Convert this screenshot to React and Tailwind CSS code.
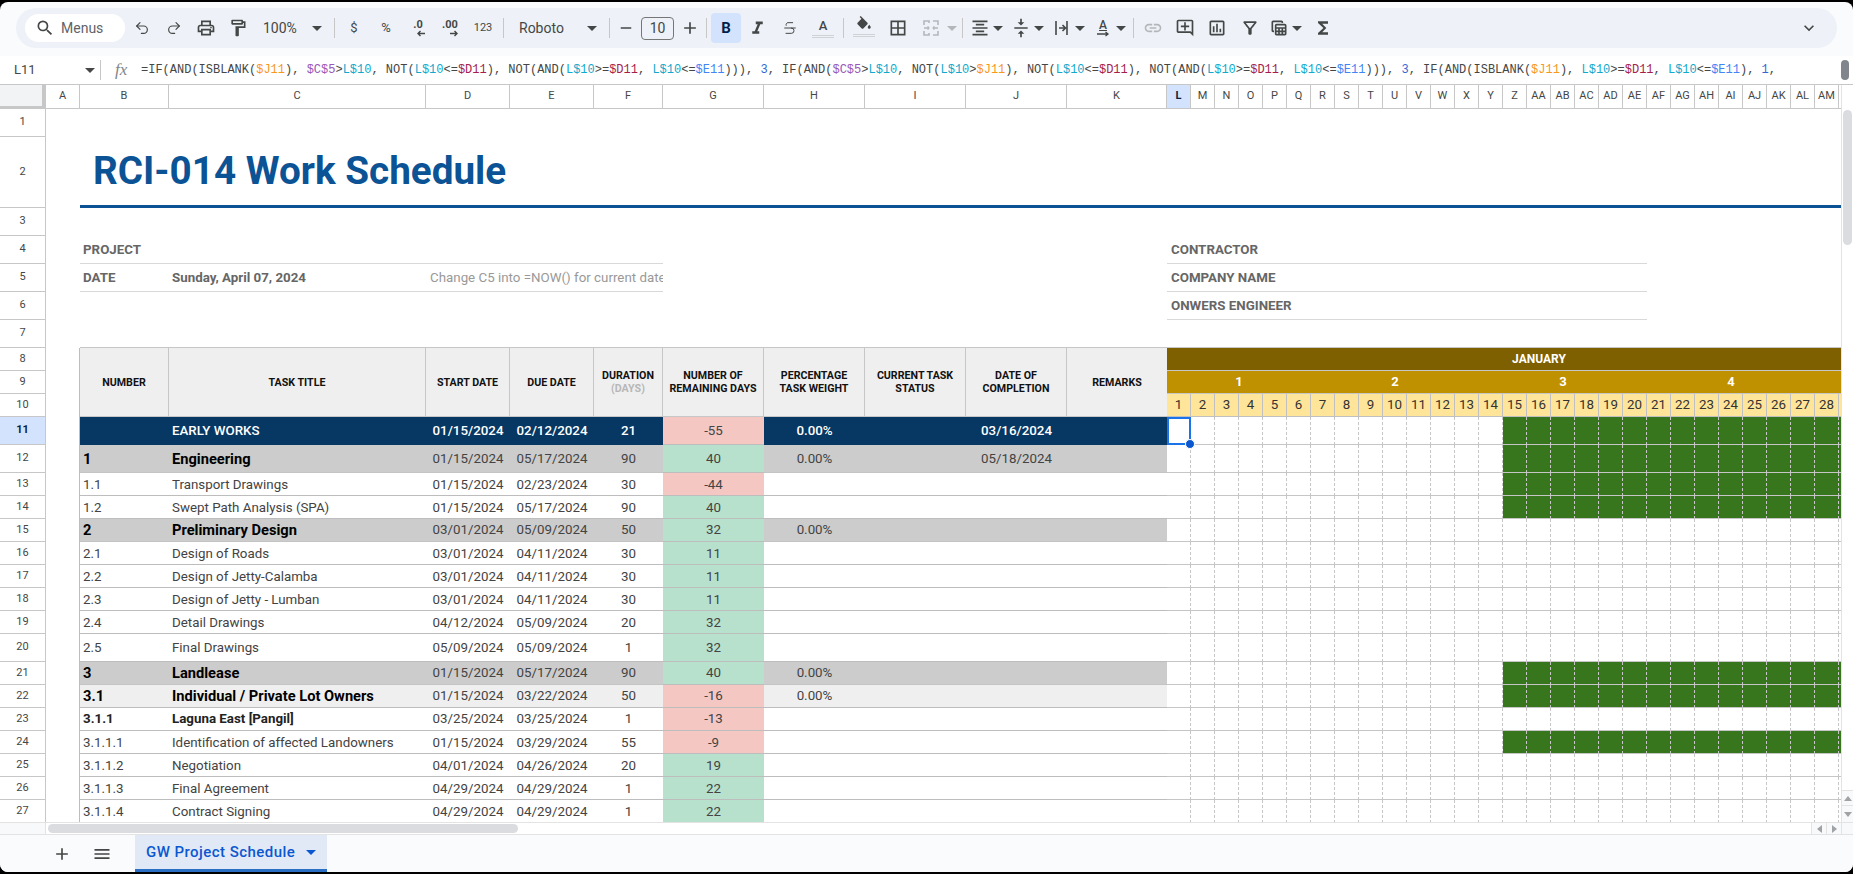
import React from 'react';
import { Undo2, Redo2, Strikethrough } from 'lucide-react';
import {
  MdSearch, MdOutlineLocalPrintshop, MdOutlineFormatPaint, MdAdd, MdRemove,
  MdFormatItalic, MdBorderAll, MdFormatAlignCenter,
  MdVerticalAlignCenter, MdLink, MdOutlineAddComment, MdOutlineInsertChart, MdOutlineFilterAlt,
  MdOutlineTableView, MdFunctions, MdExpandMore, MdMenu,
} from 'react-icons/md';

const GRID = 'grid grid-cols-[46px_34px_89px_257px_84px_84px_69px_101px_101px_101px_101px_100px_repeat(31,24px)]';
const LINE = 'border-[#bdbdbd]';

const FORMULA = '=IF(AND(ISBLANK($J11), $C$5>L$10, NOT(L$10<=$D11), NOT(AND(L$10>=$D11, L$10<=$E11))), 3, IF(AND($C$5>L$10, NOT(L$10>$J11), NOT(L$10<=$D11), NOT(AND(L$10>=$D11, L$10<=$E11))), 3, IF(AND(ISBLANK($J11), L$10>=$D11, L$10<=$E11), 1,';
const TOKEN_COLORS = {
  '$J11': 'text-[#f7981d]',
  '$C$5': 'text-[#9a57b8]',
  'L$10': 'text-[#11a9cc]',
  '$D11': 'text-[#a61d4c]',
  '$E11': 'text-[#4285f4]',
  '3': 'text-[#3367d6]',
  '1': 'text-[#3367d6]',
};

// the last three columns are only a sliver at the right edge, so they carry no label
const LETTERS = ['A','B','C','D','E','F','G','H','I','J','K','L','M','N','O','P','Q','R','S','T','U','V','W','X','Y','Z','AA','AB','AC','AD','AE','AF','AG','AH','AI','AJ','AK','AL','AM','','',''];
const DAYS = Array.from({ length: 31 }, (_, i) => i + 1);

const ROWS = [
  { n: 11, h: 'h-[28px]', kind: 'navy', num: '', title: 'EARLY WORKS', start: '01/15/2024', due: '02/12/2024', dur: '21', rem: '-55', pct: '0.00%', done: '03/16/2024', bar: true },
  { n: 12, h: 'h-[28px]', kind: 'gray', num: '1', title: 'Engineering', start: '01/15/2024', due: '05/17/2024', dur: '90', rem: '40', pct: '0.00%', done: '05/18/2024', bar: true },
  { n: 13, h: 'h-[23px]', num: '1.1', title: 'Transport Drawings', start: '01/15/2024', due: '02/23/2024', dur: '30', rem: '-44', bar: true },
  { n: 14, h: 'h-[23px]', num: '1.2', title: 'Swept Path Analysis (SPA)', start: '01/15/2024', due: '05/17/2024', dur: '90', rem: '40', bar: true },
  { n: 15, h: 'h-[23px]', kind: 'gray', num: '2', title: 'Preliminary Design', start: '03/01/2024', due: '05/09/2024', dur: '50', rem: '32', pct: '0.00%' },
  { n: 16, h: 'h-[23px]', num: '2.1', title: 'Design of Roads', start: '03/01/2024', due: '04/11/2024', dur: '30', rem: '11' },
  { n: 17, h: 'h-[23px]', num: '2.2', title: 'Design of Jetty-Calamba', start: '03/01/2024', due: '04/11/2024', dur: '30', rem: '11' },
  { n: 18, h: 'h-[23px]', num: '2.3', title: 'Design of Jetty - Lumban', start: '03/01/2024', due: '04/11/2024', dur: '30', rem: '11' },
  { n: 19, h: 'h-[23px]', num: '2.4', title: 'Detail Drawings', start: '04/12/2024', due: '05/09/2024', dur: '20', rem: '32' },
  { n: 20, h: 'h-[28px]', num: '2.5', title: 'Final Drawings', start: '05/09/2024', due: '05/09/2024', dur: '1', rem: '32' },
  { n: 21, h: 'h-[23px]', kind: 'gray', num: '3', title: 'Landlease', start: '01/15/2024', due: '05/17/2024', dur: '90', rem: '40', pct: '0.00%', bar: true },
  { n: 22, h: 'h-[23px]', kind: 'light', num: '3.1', title: 'Individual / Private Lot Owners', start: '01/15/2024', due: '03/22/2024', dur: '50', rem: '-16', pct: '0.00%', bar: true },
  { n: 23, h: 'h-[23px]', kind: 'bold', num: '3.1.1', title: 'Laguna East [Pangil]', start: '03/25/2024', due: '03/25/2024', dur: '1', rem: '-13' },
  { n: 24, h: 'h-[23px]', num: '3.1.1.1', title: 'Identification of affected Landowners', start: '01/15/2024', due: '03/29/2024', dur: '55', rem: '-9', bar: true },
  { n: 25, h: 'h-[23px]', num: '3.1.1.2', title: 'Negotiation', start: '04/01/2024', due: '04/26/2024', dur: '20', rem: '19' },
  { n: 26, h: 'h-[23px]', num: '3.1.1.3', title: 'Final Agreement', start: '04/29/2024', due: '04/29/2024', dur: '1', rem: '22' },
  { n: 27, h: 'h-[23px]', num: '3.1.1.4', title: 'Contract Signing', start: '04/29/2024', due: '04/29/2024', dur: '1', rem: '22' },
];

const HEADERS = [
  ['NUMBER'], ['TASK TITLE'], ['START DATE'], ['DUE DATE'], ['DURATION', '(DAYS)'], ['NUMBER OF', 'REMAINING DAYS'],
  ['PERCENTAGE', 'TASK WEIGHT'], ['CURRENT TASK', 'STATUS'], ['DATE OF', 'COMPLETION'], ['REMARKS'],
];

const Slot = ({ className = 'w-8', children }) => (
  <div className={`h-[30px] flex items-center justify-center text-[#444746] shrink-0 ${className}`}>{children}</div>
);

const Divider = ({ className = '' }) => <div className={`w-px h-[20px] bg-[#c7c7c7] shrink-0 ${className}`} />;

const Caret = ({ className = 'text-[#444746]' }) => (
  <span className={`w-3 flex justify-center shrink-0 ${className}`}>
    <svg width="10" height="5" viewBox="0 0 10 5"><path d="M0 0h10L5 5z" fill="currentColor" /></svg>
  </span>
);

const Combo = ({ className = 'w-[41px] pl-[7px]', children, caret }) => (
  <div className={`h-[30px] flex items-center gap-[2px] text-[#444746] shrink-0 ${className}`}>
    {children}
    <Caret className={caret} />
  </div>
);

const MergeIcon = () => (
  <svg width="20" height="20" viewBox="0 0 20 20" fill="none" stroke="#b4b7ba" strokeWidth="1.6">
    <path d="M3 7V3h5v2M12 3h5v4M3 13v4h5v-2M12 17h5v-4M3 10h5M12 10h5" />
    <path d="M8 10 6.5 8.5M8 10l-1.5 1.5M12 10l1.5-1.5M12 10l1.5 1.5" />
  </svg>
);

const OverflowIcon = () => (
  <svg width="20" height="20" viewBox="0 0 20 20" fill="none" stroke="#444746" strokeWidth="1.6">
    <path d="M4 3v14M15 3v14M7 10h6M10.5 7l3 3-3 3" />
  </svg>
);

const BucketIcon = () => (
  <svg width="18" height="18" viewBox="0 0 24 24" fill="currentColor">
    <path d="M16.56 8.94 7.62 0 6.21 1.41l2.38 2.38-5.15 5.15c-.59.59-.59 1.54 0 2.12l5.5 5.5c.29.29.68.44 1.06.44s.77-.15 1.06-.44l5.5-5.5c.59-.58.59-1.53 0-2.12zM19 11.5s-2 2.17-2 3.5c0 1.1.9 2 2 2s2-.9 2-2c0-1.33-2-3.5-2-3.5z" />
  </svg>
);

const DecimalIcon = ({ label, dir }) => (
  <div className="flex flex-col items-center leading-none">
    <span className="text-[11px] font-bold leading-[11px] text-[#444746]">{label}</span>
    <svg width="10" height="7" viewBox="0 0 10 7" fill="none" stroke="#444746" strokeWidth="1.4" className={dir === 'left' ? 'ml-[6px]' : 'ml-[8px]'}>
      {dir === 'left' ? <path d="M9 3.5H2M4.5 1 2 3.5 4.5 6" /> : <path d="M1 3.5h7M5.5 1 8 3.5 5.5 6" />}
    </svg>
  </div>
);

function Toolbar() {
  return (
    <div className="mx-4 mt-[6px] mb-2 h-10 rounded-[20px] bg-[#eef2f8] flex items-center pl-[9px] pr-3">
      <div className="w-[100px] h-7 rounded-[14px] bg-white flex items-center pl-[10px] gap-[6px] text-[14px] text-[#5f6368] shrink-0">
        <MdSearch size={20} className="text-[#444746]" />
        <span>Menus</span>
      </div>
      <Slot className="w-8 ml-px"><Undo2 size={16} strokeWidth={1.75} /></Slot>
      <Slot><Redo2 size={16} strokeWidth={1.75} /></Slot>
      <Slot><MdOutlineLocalPrintshop size={20} /></Slot>
      <Slot><MdOutlineFormatPaint size={20} /></Slot>
      <div className="w-[74px] h-[30px] flex items-center justify-between pl-[9px] pr-[5px] text-[14px] text-[#444746] shrink-0">
        <span>100%</span>
        <Caret />
      </div>
      <Divider className="ml-[6px] mr-[3px]" />
      <Slot><span className="text-[13px]">$</span></Slot>
      <Slot><span className="text-[13px]">%</span></Slot>
      <Slot><DecimalIcon label=".0" dir="left" /></Slot>
      <Slot><DecimalIcon label=".00" dir="right" /></Slot>
      <Slot className="w-[34px]"><span className="text-[11px]">123</span></Slot>
      <Divider className="ml-[3px] mr-2" />
      <div className="w-[90px] h-[30px] flex items-center justify-between pl-[7px] pr-1 text-[14px] text-[#444746] shrink-0">
        <span>Roboto</span>
        <Caret />
      </div>
      <Divider className="ml-[7px]" />
      <Slot className="w-[31px]"><MdRemove size={18} /></Slot>
      <div className="w-[33px] h-[23px] rounded-[4px] border border-[#747775] flex items-center justify-center text-[14px] text-[#444746] shrink-0">10</div>
      <Slot><MdAdd size={20} /></Slot>
      <Divider />
      <div className="ml-1 w-[30px] h-[30px] rounded-[4px] bg-[#d3e3fd] flex items-center justify-center text-[15px] font-bold text-[#041e49] shrink-0">B</div>
      <Slot><MdFormatItalic size={21} /></Slot>
      <Slot className="w-8 ml-px"><Strikethrough size={16} strokeWidth={1.5} /></Slot>
      <Slot className="w-8 ml-px">
        <div className="flex flex-col items-center">
          <span className="text-[13px] leading-[14px] font-medium">A</span>
          <span className="w-[22px] h-[3px] mt-[2px] border-y border-[#d0d3d6]" />
        </div>
      </Slot>
      <Divider className="ml-1" />
      <Slot className="w-8 ml-1">
        <div className="flex flex-col items-center -mt-1">
          <BucketIcon />
          <span className="w-[22px] h-[3px] border-y border-[#d0d3d6]" />
        </div>
      </Slot>
      <Slot className="w-8 ml-[2px]"><MdBorderAll size={20} /></Slot>
      <Combo className="w-[43px] ml-px pl-[6px] gap-[5px]" caret="text-[#b4b7ba]"><MergeIcon /></Combo>
      <Divider className="ml-1" />
      <Combo><MdFormatAlignCenter size={20} /></Combo>
      <Combo><MdVerticalAlignCenter size={20} /></Combo>
      <Combo><OverflowIcon /></Combo>
      <Combo>
        <div className="w-5 flex flex-col items-center">
          <span className="text-[12px] leading-[12px] font-medium underline">A</span>
          <svg width="14" height="6" viewBox="0 0 14 6" fill="none" stroke="#444746" strokeWidth="1.3"><path d="M1 3h11M9.5 1 12 3 9.5 5" /></svg>
        </div>
      </Combo>
      <Divider className="ml-[6px]" />
      <Slot className="w-8 ml-[3px]"><MdLink size={20} className="text-[#b4b7ba]" /></Slot>
      <Slot><MdOutlineAddComment size={20} /></Slot>
      <Slot><MdOutlineInsertChart size={20} /></Slot>
      <Slot className="w-8 ml-px"><MdOutlineFilterAlt size={20} /></Slot>
      <Combo className="w-[41px] pl-[3px]"><MdOutlineTableView size={20} /></Combo>
      <Slot><MdFunctions size={20} /></Slot>
      <Slot className="w-8 ml-auto"><MdExpandMore size={20} /></Slot>
    </div>
  );
}

function FormulaBar() {
  const parts = FORMULA.split(/(\$J11|\$C\$5|L\$10|\$D11|\$E11|\b[13](?=,))/);
  return (
    <div className="h-[29px] bg-white flex items-center border-b border-[#c7c7c7]">
      <span className="w-[84px] pl-[14px] text-[13px] text-[#444746] shrink-0">L11</span>
      <Caret />
      <div className="w-px h-[20px] bg-[#c7c7c7] ml-[4px] shrink-0" />
      <span className="w-[40px] pl-[14px] text-[17px] italic text-[#80868b] font-['Liberation_Serif',serif] shrink-0">fx</span>
      <div className="flex-1 overflow-hidden whitespace-pre text-[12px] text-[#444746] font-['Liberation_Mono',monospace]">
        {parts.map((p, i) => (TOKEN_COLORS[p] ? <span key={i} className={TOKEN_COLORS[p]}>{p}</span> : p))}
      </div>
      <div className="w-2 h-5 rounded bg-[#80868b] mx-1 shrink-0" />
    </div>
  );
}

const RowHead = ({ n, active }) => (
  <div className={`col-start-1 flex items-center justify-center text-[11px] border-r border-b border-[#c7c7c7] ${active ? 'bg-[#d3e3fd] text-[#0b1f3f] font-bold' : 'bg-white text-[#444746]'}`}>{n}</div>
);

const SideCell = () => <div className={`col-start-2 border-r ${LINE}`} />;

function ColumnHeader() {
  return (
    <div className={`${GRID} h-6`}>
      <div className="bg-[#f1f3f4] border-r-4 border-b-[3px] border-[#c7c7c7]" />
      {LETTERS.map((l, i) => (
        <div key={i} className={`flex items-center justify-center text-[11px] border-r border-b border-[#c7c7c7] ${l === 'L' ? 'bg-[#d3e3fd] text-[#0b1f3f] font-bold' : 'bg-white text-[#444746]'}`}>{l}</div>
      ))}
    </div>
  );
}

function InfoRows() {
  const label = 'text-[13.33px] font-bold text-[#666666] whitespace-nowrap';
  const rule = 'border-b border-[#d9d9d9] flex items-center';
  return (
    <>
      <div className={`${GRID} h-7`}><RowHead n={1} /></div>
      <div className={`${GRID} h-[71px]`}>
        <RowHead n={2} />
        <div className="col-start-3 col-span-41 border-b-[3px] border-[#0b5394] flex items-center pl-[13px] text-[38.67px] font-bold text-[#0b5394]">RCI-014 Work Schedule</div>
      </div>
      <div className={`${GRID} h-7`}><RowHead n={3} /></div>
      <div className={`${GRID} h-7`}>
        <RowHead n={4} />
        <div className={`col-start-3 col-span-5 pl-[3px] ${rule} ${label}`}>PROJECT</div>
        <div className={`col-start-13 col-span-20 pl-1 ${rule} ${label}`}>CONTRACTOR</div>
      </div>
      <div className={`${GRID} h-7`}>
        <RowHead n={5} />
        <div className={`col-start-3 pl-[3px] ${rule} ${label}`}>DATE</div>
        <div className={`pl-[3px] ${rule} ${label}`}>Sunday, April 07, 2024</div>
        <div className={`col-span-3 pl-1 overflow-hidden whitespace-nowrap text-[13.33px] text-[#999999] ${rule}`}>Change C5 into =NOW() for current date</div>
        <div className={`col-start-13 col-span-20 pl-1 ${rule} ${label}`}>COMPANY NAME</div>
      </div>
      <div className={`${GRID} h-7`}>
        <RowHead n={6} />
        <div className={`col-start-13 col-span-20 pl-1 ${rule} ${label}`}>ONWERS ENGINEER</div>
      </div>
      <div className={`${GRID} h-7`}>
        <RowHead n={7} />
        <div className="col-start-3 col-span-41 border-b border-[#c7c7c7]" />
      </div>
    </>
  );
}

function TableHeader() {
  return (
    <div className={`${GRID} grid-rows-[23px_23px_23px] h-[69px]`}>
      <RowHead n={8} />
      <SideCell />
      {HEADERS.map((lines, i) => (
        <div key={i} className={`row-span-3 bg-[#efefef] border-b border-[#c7c7c7] flex flex-col items-center justify-center text-[10.67px] leading-[13px] font-bold text-[#111111] ${i < 9 ? 'border-r' : ''}`}>
          {lines.map((t) => (
            <span key={t} className={t === '(DAYS)' ? 'text-[#b7b7b7]' : ''}>{t}</span>
          ))}
        </div>
      ))}
      <div className="col-span-31 bg-[#7f6000] border-b border-[#c7c7c7] flex items-center justify-center text-[12px] font-bold text-white">JANUARY</div>

      <RowHead n={9} />
      <SideCell />
      <div className="col-span-6 bg-[#bf9000] border-b border-[#c7c7c7] flex items-center justify-center text-[13px] font-bold text-white">1</div>
      <div className="col-span-7 bg-[#bf9000] border-b border-[#c7c7c7] flex items-center justify-center text-[13px] font-bold text-white">2</div>
      <div className="col-span-7 bg-[#bf9000] border-b border-[#c7c7c7] flex items-center justify-center text-[13px] font-bold text-white">3</div>
      <div className="col-span-7 bg-[#bf9000] border-b border-[#c7c7c7] flex items-center justify-center text-[13px] font-bold text-white">4</div>
      <div className="col-span-4 bg-[#bf9000] border-b border-[#c7c7c7]" />

      <RowHead n={10} />
      <SideCell />
      {DAYS.map((d) => (
        <div key={d} className="bg-[#ffe599] border-r border-b border-[#c0c0c0] flex items-center justify-center text-[13.33px] text-[#333333]">{d <= 28 ? d : ''}</div>
      ))}
    </div>
  );
}

function TaskRow({ row }) {
  const { kind } = row;
  const bg = kind === 'navy' ? 'bg-[#073763]' : kind === 'gray' ? 'bg-[#cccccc]' : kind === 'light' ? 'bg-[#efefef]' : 'bg-white';
  const text = kind === 'navy' ? 'text-white font-medium' : 'text-[#434343]';
  const line = kind === 'navy' ? 'border-[#073763]' : kind === 'gray' ? 'border-[#c4c4c4]' : LINE;
  const big = kind === 'gray' || kind === 'light';
  const titleFont = big
    ? 'text-[14.67px] font-bold text-black'
    : kind === 'bold'
      ? 'text-[13.33px] font-bold text-[#222222]'
      : kind === 'navy'
        ? 'text-[13.33px] font-medium text-white'
        : 'text-[13.33px] text-[#434343]';
  const nudge = kind ? '' : 'pt-px';
  const cell = `${bg} ${text} ${nudge} border-b ${line} flex items-center justify-center text-[13.33px]`;
  const remBg = row.rem.startsWith('-') ? 'bg-[#f4c7c3]' : 'bg-[#b7e1cd]';
  return (
    <div className={`${GRID} ${row.h}`}>
      <RowHead n={row.n} active={row.n === 11} />
      <SideCell />
      <div className={`${bg} ${nudge} border-b ${line} flex items-center pl-[3px] ${titleFont}`}>{row.num}</div>
      <div className={`${bg} ${nudge} border-b ${line} flex items-center pl-[3px] whitespace-nowrap ${titleFont}`}>{row.title}</div>
      <div className={cell}>{row.start}</div>
      <div className={cell}>{row.due}</div>
      <div className={cell}>{row.dur}</div>
      <div className={`${remBg} ${nudge} border-b ${LINE} flex items-center justify-center text-[13.33px] text-[#434343]`}>{row.rem}</div>
      <div className={cell}>{row.pct}</div>
      <div className={cell} />
      <div className={cell}>{row.done}</div>
      <div className={cell} />
      {DAYS.map((d) => {
        const filled = row.bar && d >= 15;
        return (
          <div key={d} className={`border-r border-b border-[#c6c6c6] [border-right-style:dashed]! relative ${filled ? 'bg-[#38761d]' : 'bg-white'} ${row.n === 11 && d === 1 ? 'z-10' : ''}`}>
            {row.n === 11 && d === 1 && (
              <>
                <div className="absolute -right-px -bottom-px top-0 left-0 border-2 border-[#1a73e8]" />
                <div className="absolute -right-[5px] -bottom-[5px] w-2 h-2 rounded-full bg-[#0b57d0] border border-white box-content" />
              </>
            )}
          </div>
        );
      })}
    </div>
  );
}

function VerticalScrollbar() {
  return (
    <div className="w-3 bg-white border-l border-[#e3e3e3] flex flex-col shrink-0">
      <div className="h-[25px]" />
      <div className="w-[9px] h-[135px] ml-px rounded-[5px] bg-[#dadce0]" />
      <div className="flex-1" />
      <div className="h-4 flex items-center justify-center border-y border-[#e3e3e3] bg-[#f8f9fa]">
        <svg width="8" height="5" viewBox="0 0 8 5"><path d="M0 5 4 0l4 5z" fill="#a0a3a6" /></svg>
      </div>
      <div className="h-4 flex items-center justify-center bg-[#f8f9fa]">
        <svg width="8" height="5" viewBox="0 0 8 5"><path d="M0 0h8L4 5z" fill="#a0a3a6" /></svg>
      </div>
    </div>
  );
}

function HorizontalScrollbar() {
  return (
    <div className="h-[13px] flex bg-white border-t border-[#e3e3e3] border-b">
      <div className="w-[46px] bg-[#f8f9fa] border-r border-[#e3e3e3]" />
      <div className="w-[470px] h-[9px] ml-[2px] mt-px rounded-[5px] bg-[#dadce0]" />
      <div className="flex-1" />
      <div className="w-[15px] flex items-center justify-center bg-[#f8f9fa] border-l border-[#e3e3e3]">
        <svg width="5" height="8" viewBox="0 0 5 8"><path d="M5 0v8L0 4z" fill="#a0a3a6" /></svg>
      </div>
      <div className="w-[15px] flex items-center justify-center bg-[#f8f9fa] border-l border-[#e3e3e3]">
        <svg width="5" height="8" viewBox="0 0 5 8"><path d="M0 0v8l5-4z" fill="#a0a3a6" /></svg>
      </div>
      <div className="w-3 bg-[#f8f9fa] border-l border-[#e3e3e3]" />
    </div>
  );
}

function SheetTabs() {
  return (
    <div className="flex-1 flex items-stretch bg-[#f9fbfd] text-[#444746]">
      <div className="w-[135px] flex items-center shrink-0">
        <div className="w-10 ml-[42px] flex justify-center"><MdAdd size={20} /></div>
        <div className="w-10 flex justify-center"><MdMenu size={20} /></div>
      </div>
      <div className="w-[192px] bg-[#e1e9f7] border-b-[3px] border-[#2b6fc4] flex items-center pl-[11px] gap-[10px] text-[15px] font-medium tracking-[0.45px] text-[#0b57d0] whitespace-nowrap">
        <span>GW Project Schedule</span>
        <Caret className="text-[#0b57d0]" />
      </div>
    </div>
  );
}

export default function App() {
  return (
    <div className="h-[874px] w-[1853px] bg-black pt-[2px] pb-[2px] overflow-hidden font-['Roboto',sans-serif]">
      <div className="h-[870px] rounded-[8px] overflow-hidden bg-[#f9fbfd] flex flex-col">
        <Toolbar />
        <FormulaBar />
        <div className="h-[737px] flex bg-white">
          <div className="w-[1841px] overflow-hidden">
            <ColumnHeader />
            <InfoRows />
            <TableHeader />
            {ROWS.map((row) => <TaskRow key={row.n} row={row} />)}
          </div>
          <VerticalScrollbar />
        </div>
        <HorizontalScrollbar />
        <SheetTabs />
      </div>
    </div>
  );
}
